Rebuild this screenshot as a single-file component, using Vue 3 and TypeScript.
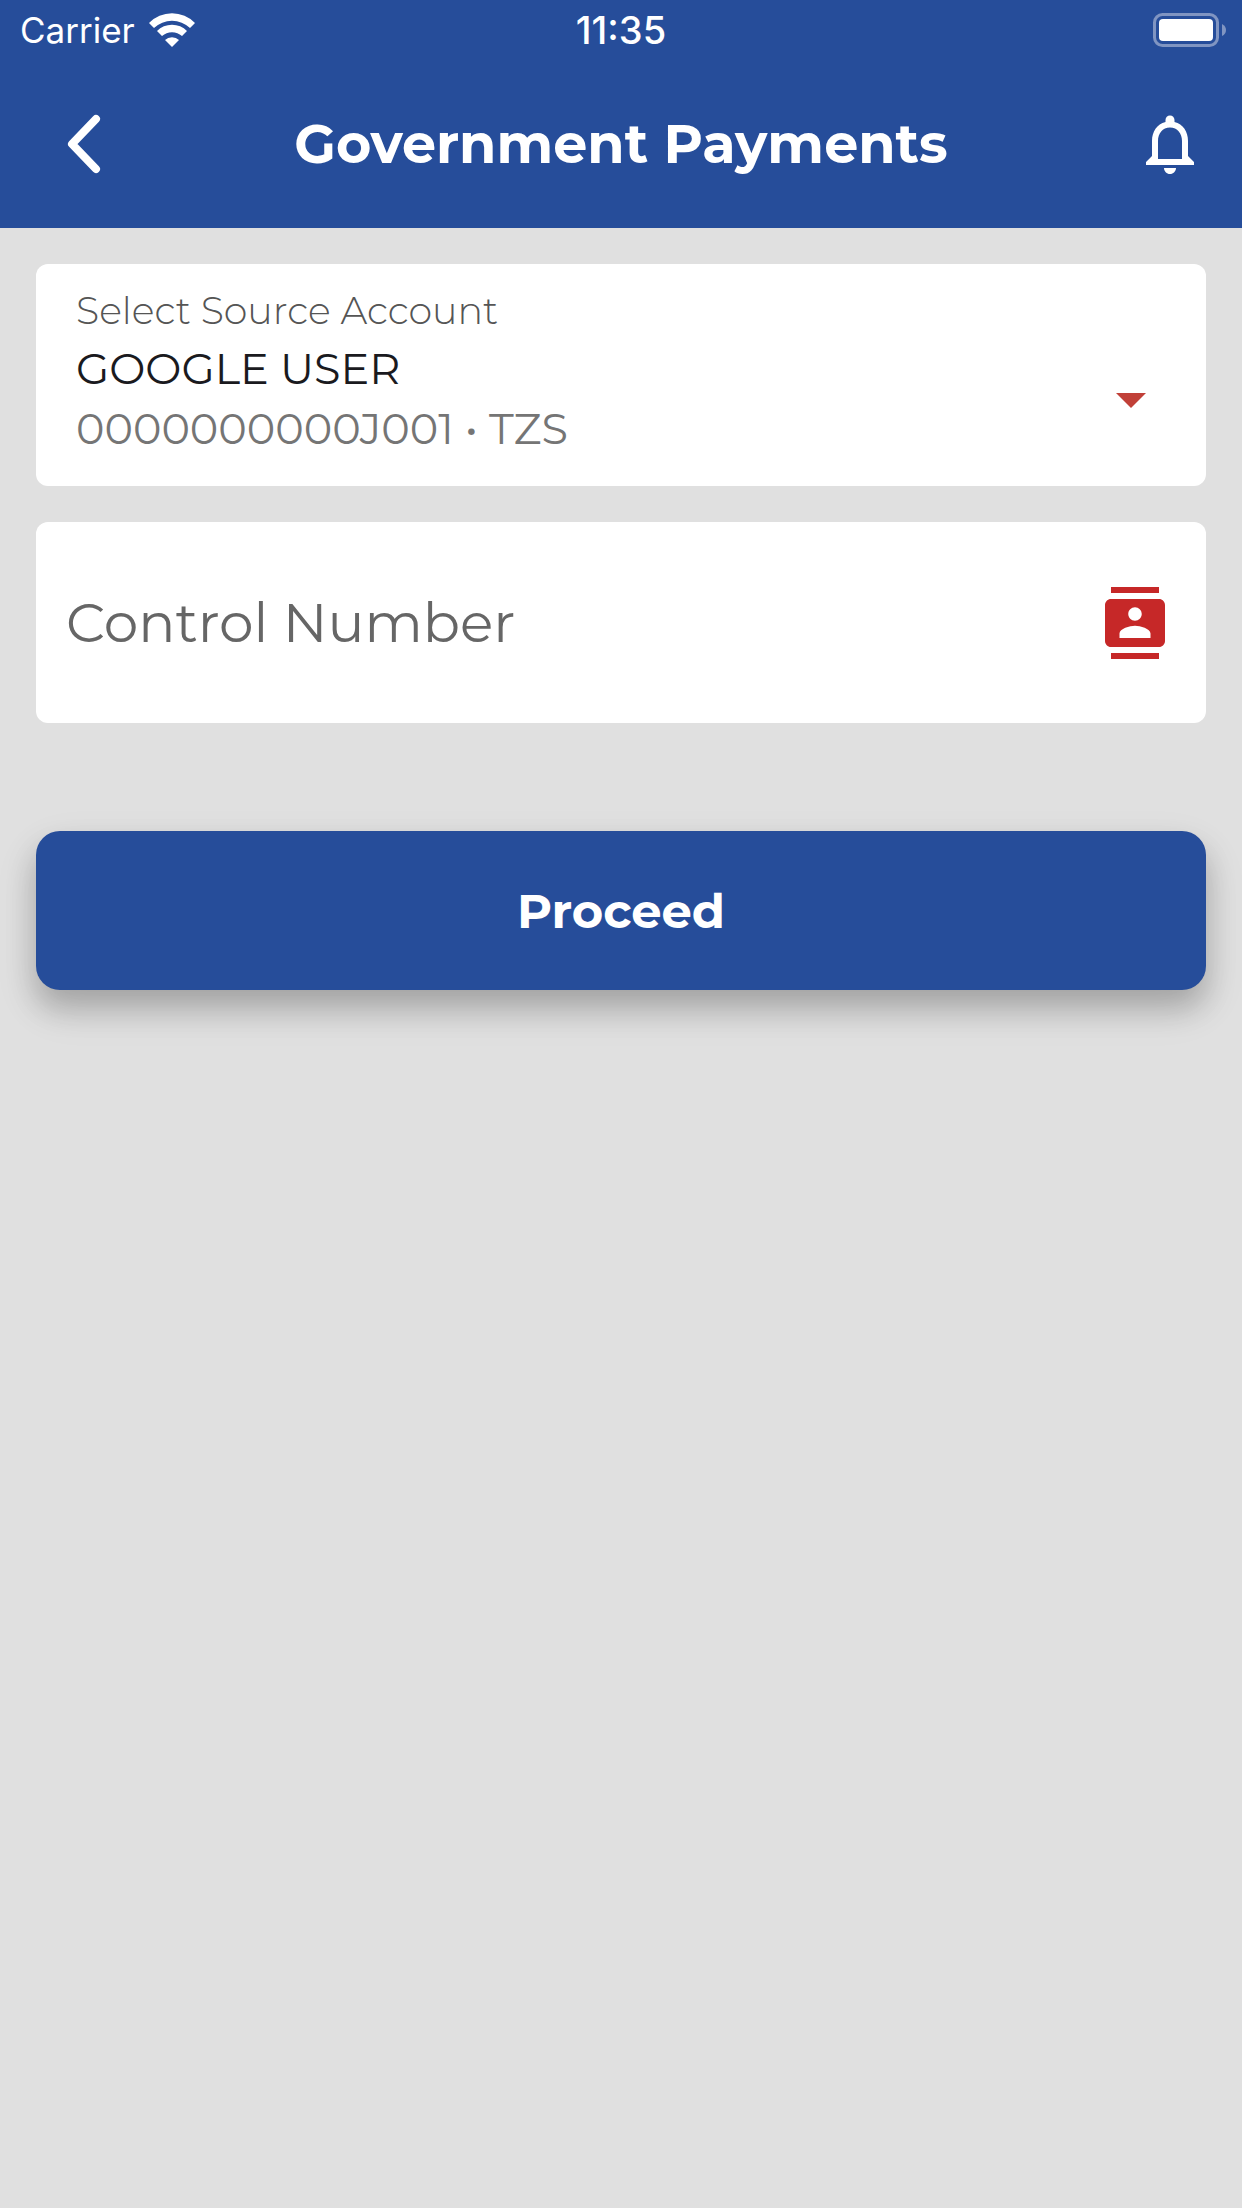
<script setup lang="ts">
import { computed, ref } from 'vue'

interface Account {
  id: string
  holder: string
  currency: string
}

const accounts: Account[] = [
  { id: '0000000000J001', holder: 'GOOGLE USER', currency: 'TZS' },
]

const selectedId = ref<string>(accounts[0].id)
const controlNumber = ref<string>('')

const selected = computed<Account>(
  () => accounts.find((a) => a.id === selectedId.value) ?? accounts[0],
)
</script>

<template>
  <div class="screen">
    <header class="header">
      <div class="status">
        <div class="network">
          <span>Carrier</span>
          <svg class="wifi" viewBox="0 0 46 34" aria-hidden="true">
            <path d="M0 10A32 32 0 0 1 46 10L41 15A26 26 0 0 0 5 15Z" />
            <path d="M8 18A21 21 0 0 1 38 18L33 23A15 15 0 0 0 13 23Z" />
            <path d="M16 27A10 10 0 0 1 30 27L23 34Z" />
          </svg>
        </div>
        <time class="clock">11:35</time>
        <svg class="battery" viewBox="0 0 73 34" aria-hidden="true">
          <rect x="1.5" y="1.5" width="63" height="31" rx="8" fill="none" stroke="#8095c2" stroke-width="3" />
          <rect x="6" y="6" width="54" height="22" rx="4" fill="#fff" />
          <path d="M69 11q4 2 4 6t-4 6z" fill="#8095c2" />
        </svg>
      </div>
      <div class="bar">
        <button class="icon-button back" type="button" aria-label="Back">
          <svg viewBox="0 0 72 72" aria-hidden="true">
            <path d="M48 11L24 36L48 61" fill="none" stroke="#fff" stroke-width="8" stroke-linecap="round" stroke-linejoin="round" />
          </svg>
        </button>
        <h1 class="title">Government Payments</h1>
        <button class="icon-button alerts" type="button" aria-label="Notifications">
          <svg viewBox="0 0 24 24" fill="#fff" aria-hidden="true">
            <path d="M12 22c1.1 0 2-.9 2-2h-4c0 1.1.9 2 2 2zm6-6v-5c0-3.07-1.63-5.64-4.5-6.32V4c0-.83-.67-1.5-1.5-1.5s-1.5.67-1.5 1.5v.68C7.64 5.36 6 7.92 6 11v5l-2 2v1h16v-1l-2-2zm-2 1H8v-6c0-2.48 1.51-4.5 4-4.5s4 2.02 4 4.5v6z" />
          </svg>
        </button>
      </div>
    </header>

    <main class="content">
      <section class="card account">
        <div class="details">
          <label class="caption" for="source">Select Source Account</label>
          <select id="source" v-model="selectedId" class="holder">
            <option v-for="a in accounts" :key="a.id" :value="a.id">{{ a.holder }}</option>
          </select>
          <p class="number">{{ selected.id }} • {{ selected.currency }}</p>
        </div>
        <svg class="caret" viewBox="0 0 30 15" aria-hidden="true">
          <path d="M0 0H30L15 15Z" fill="#c14038" />
        </svg>
      </section>

      <section class="card control">
        <input
          v-model="controlNumber"
          class="control-input"
          type="text"
          placeholder="Control Number"
          aria-label="Control Number"
        />
        <button class="icon-button" type="button" aria-label="Saved control numbers">
          <svg viewBox="0 0 24 24" fill="#c62828" aria-hidden="true">
            <path d="M20 0H4v2h16V0zM4 24h16v-2H4v2zM20 4H4c-1.1 0-2 .9-2 2v12c0 1.1.9 2 2 2h16c1.1 0 2-.9 2-2V6c0-1.1-.9-2-2-2zm-8 2.75c1.24 0 2.25 1.01 2.25 2.25s-1.01 2.25-2.25 2.25S9.75 10.24 9.75 9 10.76 6.75 12 6.75zM17.17 17H6.83v-1.5c0-1.67 3.45-2.6 5.17-2.6s5.17.93 5.17 2.6V17z" />
          </svg>
        </button>
      </section>

      <button class="proceed" type="button">Proceed</button>
    </main>
  </div>
</template>

<style>
body {
  margin: 0;
  background: #e0e0e0;
}
</style>

<style scoped>
.screen {
  min-height: 100vh;
  background: #e0e0e0;
  font-family: Montserrat, Inter, "Liberation Sans", sans-serif;
}

.header {
  background: #264d9a;
  color: #fff;
}

.status {
  display: grid;
  grid-template-columns: 1fr auto 1fr;
  align-items: center;
  height: 60px;
  padding: 0 16px;
  font-family: Inter, "Liberation Sans", sans-serif;
  font-size: 35px;
  line-height: 60px;
}

.network {
  display: flex;
  align-items: center;
  gap: 14px;
  padding-left: 4px;
}

.wifi {
  width: 46px;
  height: 34px;
  fill: #fff;
}

.clock {
  font-size: 38px;
  font-weight: 500;
}

.battery {
  width: 73px;
  height: 34px;
  justify-self: end;
}

.bar {
  display: grid;
  grid-template-columns: 1fr auto 1fr;
  align-items: center;
  height: 168px;
  padding: 0 36px;
}

.back {
  margin-left: 12px;
}

.alerts {
  justify-self: end;
}

.title {
  margin: 0;
  font-size: 54px;
  font-weight: 700;
  line-height: 72px;
}

.icon-button {
  flex: none;
  width: 72px;
  height: 72px;
  padding: 0;
  border: 0;
  background: none;
}

.icon-button svg {
  display: block;
  width: 100%;
  height: 100%;
}

.content {
  display: flex;
  flex-direction: column;
  gap: 36px;
  padding: 36px;
}

.card {
  display: flex;
  align-items: center;
  border-radius: 12px;
  background: #fff;
}

.account {
  padding: 19px 60px 27px 40px;
}

.details {
  display: flex;
  flex: 1;
  flex-direction: column;
  min-width: 0;
}

.caption {
  color: #555;
  font-size: 38px;
  font-weight: 300;
  line-height: 56px;
}

.holder {
  appearance: none;
  width: 100%;
  height: 60px;
  padding: 0;
  border: 0;
  background: none;
  color: #1a1a1e;
  font-family: inherit;
  font-size: 43px;
  font-weight: 450;
  line-height: 60px;
}

.number {
  margin: 0;
  color: #757575;
  font-size: 43px;
  font-weight: 400;
  line-height: 60px;
}

.caret {
  width: 30px;
  height: 15px;
  margin-top: 58px;
}

.control {
  gap: 24px;
  padding: 0 35px 0 30px;
}

.control-input {
  flex: 1;
  min-width: 0;
  height: 201px;
  padding: 0;
  border: 0;
  outline: 0;
  background: none;
  color: #1a1a1e;
  font-family: inherit;
  font-size: 55px;
  font-weight: 450;
}

.control-input::placeholder {
  color: #666;
  opacity: 1;
}

.proceed {
  height: 159px;
  margin-top: 72px;
  border: 0;
  border-radius: 24px;
  background: #264d9a;
  box-shadow:
    0 18px 30px rgba(0, 0, 0, 0.22),
    0 18px 48px rgba(0, 0, 0, 0.08);
  color: #fff;
  font-family: inherit;
  font-size: 48px;
  font-weight: 700;
}
</style>
